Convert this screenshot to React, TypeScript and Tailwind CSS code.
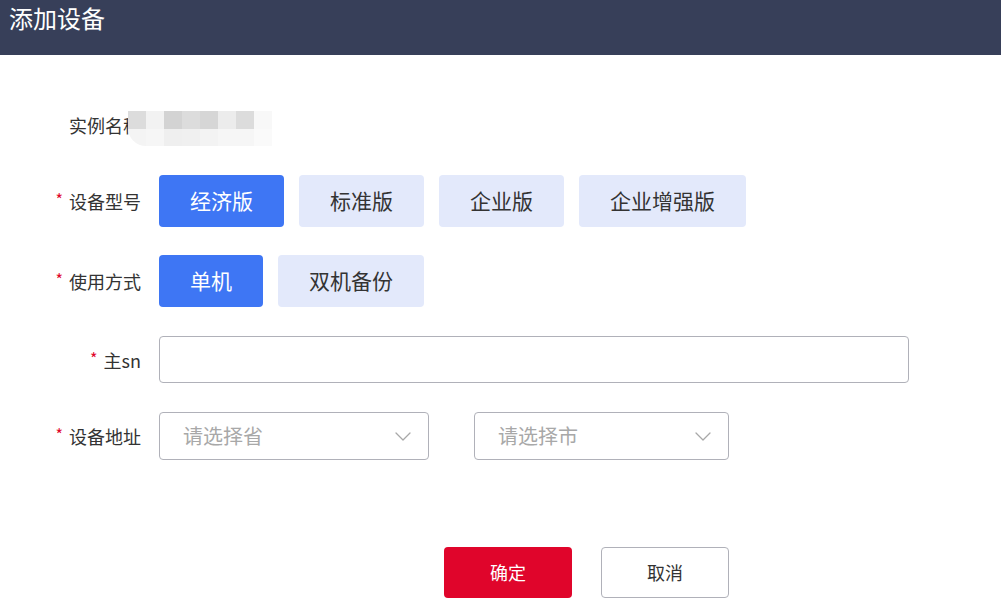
import { useState } from 'react'

const font = { fontFamily: '"Noto Sans CJK SC", "Noto Sans", sans-serif' }

const blurTop = ['#dcdcdc', '#f2f2f2', '#d3d3d3', '#dcdcdc', '#d6d6d6', '#ececec', '#dcdcdc', '#f8f8f8']
const blurBottom = ['#f4f4f4', '#f6f6f6', '#efefef', '#f0f0f0', '#f3f3f3', '#f6f6f6', '#f6f6f6', '#fafafa']

function Label({ text, required }: { text: string; required?: boolean }) {
  return (
    <div className="w-[141px] shrink-0 flex items-center justify-end text-[18px] leading-[24px] text-[#333]">
      {required && <span className="text-[#e0052b] text-[16px] leading-[16px] mr-[6px] -mt-[4px]">*</span>}
      <span>{text}</span>
    </div>
  )
}

function Chevron() {
  return (
    <svg width="16" height="9" viewBox="0 0 16 9" fill="none" className="shrink-0">
      <path d="M1 1l7 7 7-7" stroke="#a8a8a8" strokeWidth="1.3" strokeLinecap="round" strokeLinejoin="round" />
    </svg>
  )
}

function Select({ placeholder, width }: { placeholder: string; width: string }) {
  return (
    <div
      className={`${width} h-[48px] border border-[#b0b1b9] rounded-[4px] flex items-center justify-between pl-[23px] pr-[17px] bg-white`}
    >
      <span className="text-[20px] text-[#a8a8a8]">{placeholder}</span>
      <Chevron />
    </div>
  )
}

export default function App() {
  const [model, setModel] = useState('经济版')
  const [mode, setMode] = useState('单机')
  const models = ['经济版', '标准版', '企业版', '企业增强版']
  const modes = ['单机', '双机备份']

  const optionClass = (active: boolean) =>
    active
      ? 'h-[52px] px-[31px] rounded-[4px] bg-[#3e76f4] text-white text-[21px]'
      : 'h-[52px] px-[31px] rounded-[4px] bg-[#e3e9fb] text-[#333] text-[21px]'

  return (
    <div className="w-[1001px] h-[616px] bg-white overflow-hidden" style={font}>
      {/* Header */}
      <div className="h-[55px] bg-[#373f59] px-[9px] pt-[4px]">
        <h1 className="text-[24px] leading-[28px] text-white">添加设备</h1>
      </div>

      {/* Form */}
      <div className="pt-[50px] flex flex-col gap-[28px]">
        <div className="h-[42px] flex items-start">
          <div className="h-[40px] flex items-center">
            <Label text="实例名称" />
          </div>
          <div className="-ml-[13px] mt-[6px] rounded-bl-[18px] overflow-hidden flex flex-col">
            <div className="flex">
              {blurTop.map((c, i) => (
                <div key={i} className="w-[18px] h-[18px]" style={{ background: c }} />
              ))}
            </div>
            <div className="flex">
              {blurBottom.map((c, i) => (
                <div key={i} className="w-[18px] h-[17px]" style={{ background: c }} />
              ))}
            </div>
          </div>
        </div>

        <div className="flex items-center">
          <Label text="设备型号" required />
          <div className="ml-[18px] flex gap-[15px]">
            {models.map((m) => (
              <button key={m} className={optionClass(model === m)} onClick={() => setModel(m)}>
                {m}
              </button>
            ))}
          </div>
        </div>

        <div className="flex items-center">
          <Label text="使用方式" required />
          <div className="ml-[18px] flex gap-[15px]">
            {modes.map((m) => (
              <button key={m} className={optionClass(mode === m)} onClick={() => setMode(m)}>
                {m}
              </button>
            ))}
          </div>
        </div>

        <div className="flex items-center pt-[1px]">
          <Label text="主sn" required />
          <input className="ml-[18px] w-[750px] h-[47px] border border-[#b0b1b9] rounded-[4px] px-[16px] text-[18px] outline-none" />
        </div>

        <div className="flex items-center pt-[1px]">
          <Label text="设备地址" required />
          <div className="ml-[18px] flex gap-[45px]">
            <Select placeholder="请选择省" width="w-[270px]" />
            <Select placeholder="请选择市" width="w-[255px]" />
          </div>
        </div>
      </div>

      {/* Actions */}
      <div className="mt-[87px] pl-[444px] flex gap-[29px]">
        <button className="w-[128px] h-[51px] rounded-[4px] bg-[#e0052b] text-white text-[18px]">确定</button>
        <button className="w-[128px] h-[51px] rounded-[4px] border border-[#b0b1b9] bg-white text-[#333] text-[18px]">
          取消
        </button>
      </div>
    </div>
  )
}
